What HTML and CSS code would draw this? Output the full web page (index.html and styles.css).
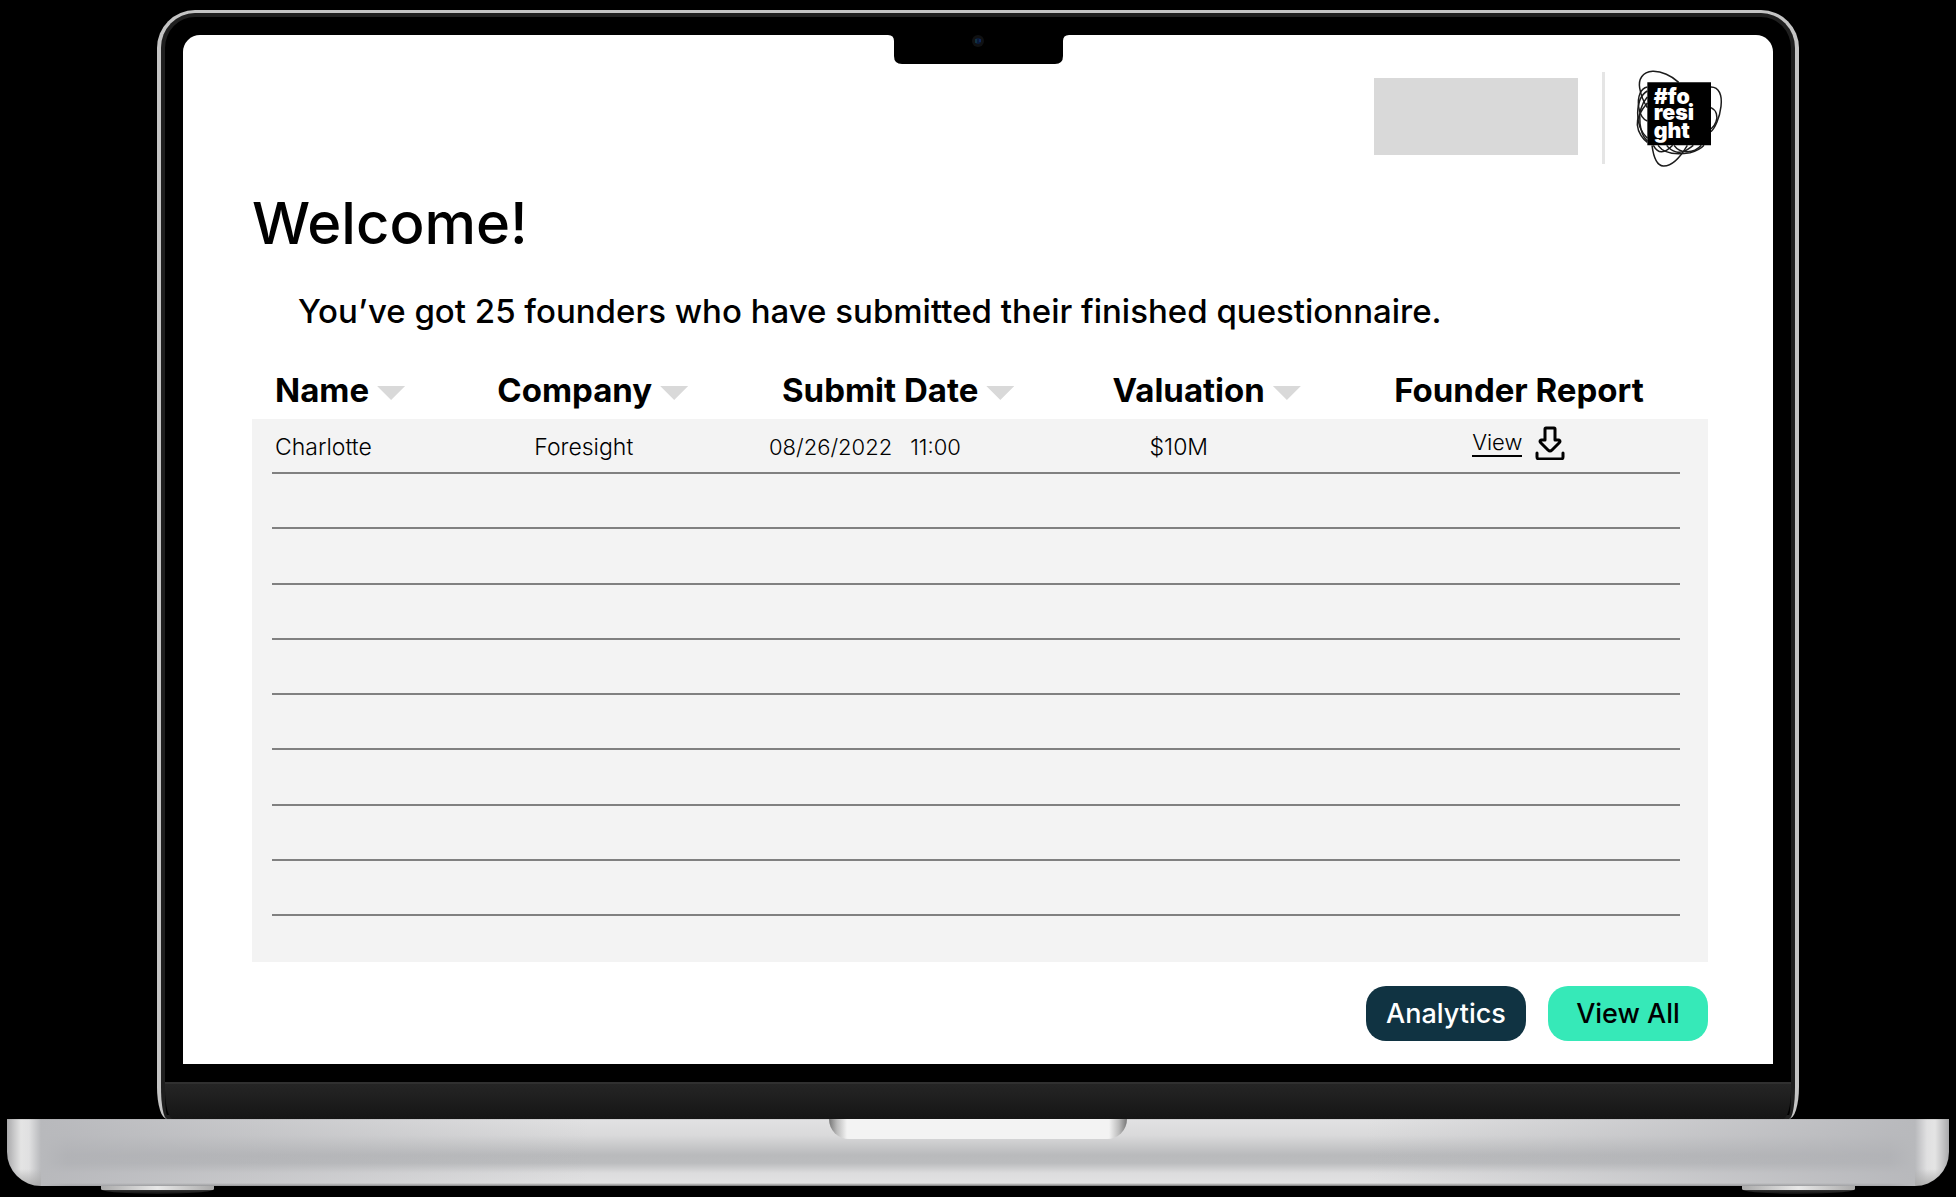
FILE: index.html
```html
<!DOCTYPE html>
<html lang="en">
<head>
<meta charset="utf-8">
<title>Foresight – Founder reports</title>
<link rel="stylesheet" href="styles.css">
</head>
<body>
<div class="laptop">
  <div class="lid">
    <main class="screen">
      <svg class="notch" viewBox="0 0 181 30" aria-hidden="true">
        <path d="M0 0Q6 0 6 6V21Q6 29 14 29H167Q175 29 175 21V6Q175 0 181 0Z"/>
        <circle cx="90" cy="6" r="6" fill="#101112"/>
        <circle cx="90" cy="6" r="3" fill="#0a1a3a"/>
        <path d="M88 4v4" stroke="#1b4a4a"/>
        <path d="M92 4v3" stroke="#15357a"/>
      </svg>
      <header class="topbar">
        <div class="partner"></div>
        <div class="divider"></div>
        <svg class="logo" viewBox="105 55 264 300" role="img" aria-label="#foresight">
          <g fill="none" stroke="#1c1c1c" stroke-width="4.5">
            <path d="M236 98C215 78 184 64 158 65C126 67 115 90 119 115C122 134 133 160 142 174"/>
            <path d="M333 112C358 112 367 138 363 170C359 206 344 236 333 246"/>
            <path d="M333 174C350 182 354 200 348 216C344 228 338 234 333 238"/>
            <path d="M142 112C122 116 112 140 116 172C119 196 131 211 142 214"/>
            <path d="M142 124C124 134 114 156 113 190C112 222 126 250 142 266"/>
            <path d="M142 142C126 160 116 186 120 222C123 250 133 266 142 274"/>
            <path d="M142 160C128 176 110 200 112 226C114 250 130 270 142 278"/>
            <path d="M156 287C160 318 170 348 190 349C216 350 240 324 262 287"/>
            <path d="M160 287C174 312 192 314 218 287"/>
            <path d="M174 287C196 318 240 314 270 309C290 304 304 296 312 287"/>
            <path d="M200 287C214 306 240 316 262 300C270 294 276 290 280 287"/>
            <path d="M222 287C240 312 280 314 304 287"/>
          </g>
          <path d="M142 98H333V287H142Z"/>
          <text class="logo-text"><tspan x="161" y="163">#fo</tspan><tspan x="161" y="212">resi</tspan><tspan x="161" y="264">ght</tspan></text>
        </svg>
      </header>

      <section class="content">
        <h1>Welcome!</h1>
        <p class="summary">You’ve got 25 founders who have submitted their finished questionnaire.</p>

        <div class="report">
          <table>
            <colgroup>
              <col class="col-name"><col class="col-company"><col class="col-date"><col class="col-value"><col>
            </colgroup>
            <thead>
              <tr>
                <th class="name"><button class="sort">Name</button></th>
                <th><button class="sort">Company</button></th>
                <th class="date"><button class="sort">Submit Date</button></th>
                <th><button class="sort">Valuation</button></th>
                <th>Founder Report</th>
              </tr>
            </thead>
            <tbody>
              <tr>
                <td class="name">Charlotte</td>
                <td class="inset">Foresight</td>
                <td><span class="stamp"><span>08/26/2022</span><span>11:00</span></span></td>
                <td class="inset">$10M</td>
                <td class="actions-cell">
                  <span class="actions">
                    <a class="view" href="#report">View</a>
                    <a class="download" href="#download" aria-label="Download report">
                      <svg viewBox="0 0 30 34" aria-hidden="true">
                        <path d="M10 3Q10 2 11 2H19Q20 2 20 3V14H24Q26 15 24 17L17 24Q15 26 13 24L6 17Q4 15 6 14H10Z"/>
                        <path d="M2 27V31Q2 33 4 33H26Q28 33 28 31V27"/>
                      </svg>
                    </a>
                  </span>
                </td>
              </tr>
              <tr><td colspan="5"></td></tr>
              <tr><td colspan="5"></td></tr>
              <tr><td colspan="5"></td></tr>
              <tr><td colspan="5"></td></tr>
              <tr><td colspan="5"></td></tr>
              <tr><td colspan="5"></td></tr>
              <tr><td colspan="5"></td></tr>
              <tr><td colspan="5"></td></tr>
            </tbody>
          </table>
        </div>

        <div class="buttons">
          <button class="btn btn-dark">Analytics</button>
          <button class="btn btn-mint">View All</button>
        </div>
      </section>
    </main>
    <div class="chin"></div>
  </div>
  <div class="base"><div class="thumb"></div></div>
  <div class="feet"><div class="foot"></div><div class="foot"></div></div>
</div>
</body>
</html>
```

FILE: styles.css
```css
* { box-sizing: border-box; }

body {
  margin: 0;
  background: #000;
  color: #000;
  font-family: Inter, "Liberation Sans", sans-serif;
}

.laptop { padding: 10px 7px 0; }

/* Lid */
.lid {
  margin: 0 150px;
  padding: 22px 22px 0;
  border: 4px solid #c4c4c4;
  border-top-width: 3px;
  border-bottom: 0;
  border-radius: 38px 38px 10px 10px / 38px 38px 32px 32px;
  background: #000;
  box-shadow: inset 0 0 0 4px #1f1f1f;
}

.screen {
  position: relative;
  background: #fff;
  border-radius: 17px 17px 0 0;
  padding-bottom: 23px;
}

.notch {
  position: absolute;
  top: 0;
  left: 50%;
  width: 181px;
  height: 30px;
  margin-left: -90px;
}

.chin {
  height: 37px;
  margin: 18px -18px 0;
  border-top: 2px solid #303030;
  border-radius: 0 0 8px 8px / 0 0 30px 30px;
  background: linear-gradient(#252525, #151515);
}

/* Header */
.topbar {
  display: flex;
  justify-content: flex-end;
  align-items: center;
  padding: 33px 50px 0 70px;
}

.partner { width: 204px; height: 77px; margin-bottom: 4px; background: #d9d9d9; }
.divider { width: 3px; height: 92px; margin: 0 30px 0 24px; background: #e5e5e5; }
.logo { width: 88px; height: 100px; }
.logo-text { fill: #fff; font-size: 64px; font-weight: 900; }

/* Content */
.content { padding: 19px 65px 0 69px; }

h1 {
  margin: 0;
  font-size: 58px;
  line-height: 72px;
  font-weight: 500;
}

.summary {
  margin: 32px 0 39px;
  padding-left: 46px;
  font-size: 33px;
  line-height: 40px;
  font-weight: 500;
}

.report {
  padding: 0 28px 46px 20px;
  background: linear-gradient(#f3f3f3, #f3f3f3) no-repeat 0 49px;
}

table {
  width: 100%;
  height: 546px;
  table-layout: fixed;
  border-spacing: 0;
}

.col-name { width: 16%; }
.col-company { width: 19.3%; }
.col-date { width: 24.4%; }
.col-value { width: 20%; }

th, td { padding: 0; text-align: left; white-space: nowrap; }

th {
  height: 49px;
  padding-bottom: 9px;
  font-size: 33px;
  line-height: 40px;
  font-weight: 700;
}

.sort {
  display: flex;
  align-items: center;
  gap: 8px;
  padding: 0;
  border: 0;
  background: none;
  color: inherit;
  font: inherit;
}

.sort::after {
  content: "";
  width: 28px;
  height: 14px;
  margin-top: 6px;
  background: #d9d9d9;
  clip-path: polygon(0 0, 100% 0, 50% 100%);
}

td {
  height: 55px;
  padding-top: 2px;
  border-bottom: 2px solid #808080;
  font-size: 23px;
  line-height: 28px;
  font-weight: 300;
}

.name { padding-left: 3px; }
th.date { padding-left: 13px; }
.inset { padding-left: 37px; }
.actions-cell { padding: 0 0 6px 78px; font-size: 22px; }

.stamp { display: flex; gap: 18px; font-size: 22px; }
.actions { display: flex; align-items: center; gap: 13px; }

.view {
  color: #000;
  text-decoration: none;
  border-bottom: 2px solid #000;
  line-height: 26px;
}

.download svg {
  display: block;
  width: 30px;
  height: 34px;
  fill: none;
  stroke: #000;
  stroke-width: 3;
  stroke-linecap: round;
  stroke-linejoin: round;
}

.buttons {
  display: flex;
  justify-content: flex-end;
  gap: 22px;
  margin-top: 24px;
}

.btn {
  width: 160px;
  height: 55px;
  padding: 0;
  border: 0;
  border-radius: 20px;
  font-family: inherit;
  font-size: 27px;
  font-weight: 500;
}

.btn-dark { background: #103342; color: #fff; }
.btn-mint { background: #36e9b8; color: #000; }

/* Base */
.base {
  height: 67px;
  border-radius: 0 0 34px 34px;
  background:
    linear-gradient(#8886 0, transparent 1px),
    linear-gradient(transparent 50px, #b0b0b080 58px, #a8a8a8c0 65px) no-repeat left / 34px 100%,
    linear-gradient(transparent 50px, #b0b0b080 58px, #a8a8a8c0 65px) no-repeat right / 34px 100%,
    linear-gradient(90deg, #a9a9ab 0, #c8c8c9 7px, #e4e4e4 14px, #e0e0e1 22px, #b8b9bc 34px, #b0b1b5cc 60px, #b0b1b500 30%, #b0b1b500 70%, #b0b1b5cc calc(100% - 60px), #b8b9bc calc(100% - 34px), #e0e0e1 calc(100% - 22px), #e4e4e4 calc(100% - 14px), #c8c8c9 calc(100% - 7px), #a9a9ab 100%),
    linear-gradient(#e2e2e3 0, #dadadb 16px, #b9babc 36px, #bbbcbe 44px, #dcdcdd 54px, #e2e2e2 64px, #777 67px);
}

.thumb {
  width: 298px;
  height: 20px;
  margin: 0 auto;
  border-radius: 0 0 20px 20px;
  background: linear-gradient(90deg, #777 0, #bbb 8px, #f3f3f3 18px, #f3f3f3 calc(100% - 18px), #bbb calc(100% - 8px), #777 100%);
}

.feet {
  display: flex;
  justify-content: space-between;
  padding: 0 94px;
}

.foot {
  width: 113px;
  height: 8px;
  border-radius: 0 0 50% 50% / 0 0 5px 5px;
  background: linear-gradient(90deg, #aaa, #e8e8e8 50%, #aaa) no-repeat 0 0 / 100% 4px, linear-gradient(#555, #111);
}
```
